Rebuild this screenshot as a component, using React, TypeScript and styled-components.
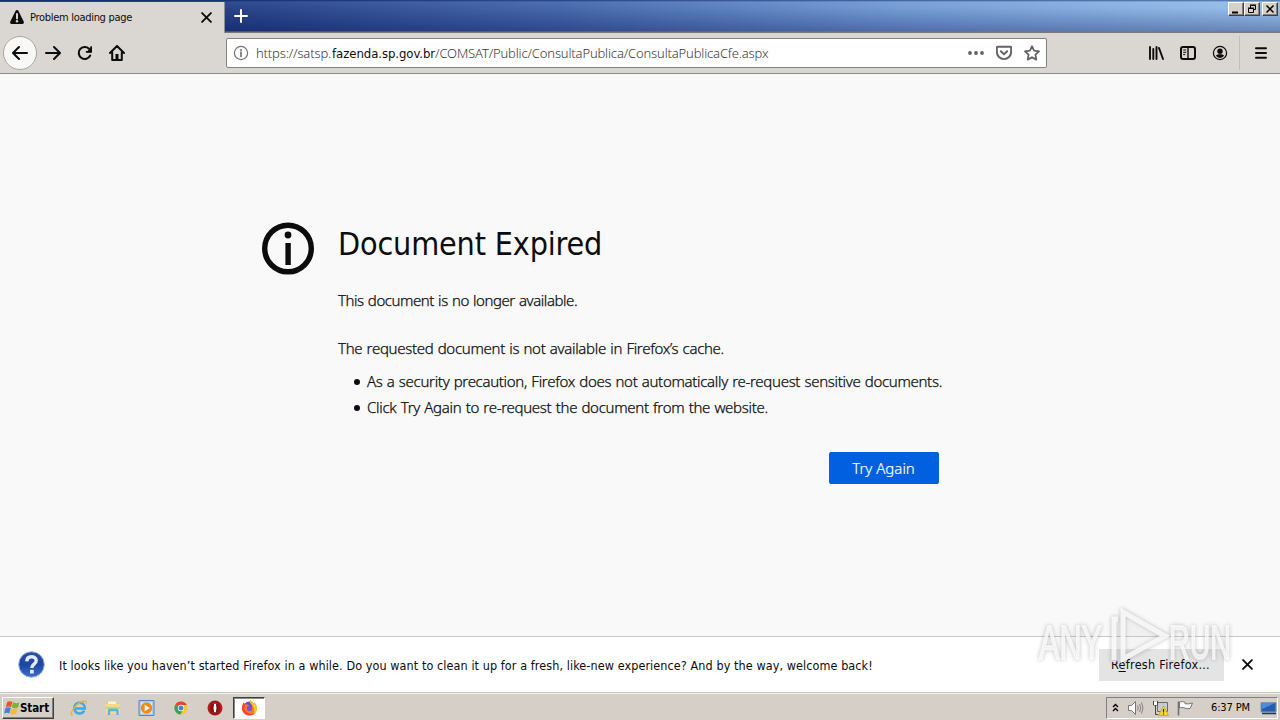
import React from 'react';
import styled, { createGlobalStyle } from 'styled-components';

const GlobalStyle = createGlobalStyle`
  *, *::before, *::after { box-sizing: border-box; }
  body { margin: 0; overflow: hidden; }
  svg { display: block; flex: none; }
  button { font: inherit; color: inherit; border: 0; padding: 0; margin: 0; background: none; }
`;

const condensed = '"DejaVu Sans Condensed", "DejaVu Sans", sans-serif';
const humanist = '"Noto Sans", "Open Sans", sans-serif';

const Desktop = styled.div`
  position: relative;
  display: flex;
  flex-direction: column;
  width: 1280px;
  height: 720px;
  overflow: hidden;
  background: #f9f9f9;
  color: #0c0c0d;
  font-family: ${condensed};
`;

/* Window title bar */
const TitleBar = styled.header`
  display: flex;
  flex: none;
  height: 33px;
  background:
    linear-gradient(180deg, rgba(5, 30, 95, 0.55) 0, rgba(255, 255, 255, 0.1) 2px, rgba(255, 255, 255, 0.06) 8px, rgba(20, 25, 90, 0.32) 31px, #77797c 32px),
    linear-gradient(90deg, #173278 0, #1b3880 225px, #3b5fa5 560px, #6c96d2 900px, #92bde9 1280px);
`;
const Tab = styled.div`
  display: flex;
  align-items: center;
  width: 225px;
  height: 31px;
  margin-top: 2px;
  padding: 0 12px 1px 9px;
  background: #dad6d1;
  border-right: 1px solid #8c8f98;
`;
const TabTitle = styled.span`
  flex: 1;
  margin-left: 5px;
  font-size: 11px;
  letter-spacing: -0.294px;
  white-space: nowrap;
`;
const NewTab = styled.button`
  display: flex;
  margin: 9px 0 0 9px;
  height: 14px;
`;
const WindowControls = styled.div`
  display: flex;
  margin: 2px 2px 0 auto;
`;
const WindowButton = styled.button<{ $gap?: boolean }>`
  display: flex;
  align-items: center;
  justify-content: center;
  width: 16px;
  height: 14px;
  margin-left: ${p => (p.$gap ? 2 : 0)}px;
  background: #d6d1c8;
  border: 1px solid;
  border-color: #fff #404040 #404040 #fff;
  box-shadow: inset -1px -1px #808080;
`;

/* Navigation toolbar */
const Toolbar = styled.nav`
  display: flex;
  align-items: center;
  flex: none;
  height: 41px;
  padding: 0 3px;
  background: #dad6d1;
  border-bottom: 1px solid #8b8b88;
`;
const BackButton = styled.button`
  display: flex;
  align-items: center;
  justify-content: center;
  width: 34px;
  height: 34px;
  border: 1px solid #aaa7a3;
  border-radius: 50%;
  background: #f8f8f7;
`;
const ToolButton = styled.button`
  display: flex;
  align-items: center;
  justify-content: center;
  width: 32px;
  height: 32px;
`;
const AddressBar = styled.div`
  display: flex;
  align-items: center;
  width: 821px;
  height: 30px;
  margin-left: 93px;
  padding: 0 6px 0 6px;
  background: #fff;
  border: 1px solid #85827e;
  border-radius: 2px;
`;
const Url = styled.div`
  flex: 1;
  margin-left: 7px;
  font: 300 13px ${humanist};
  letter-spacing: -0.155px;
  color: #38383d;
  white-space: nowrap;
`;
const Domain = styled.span`
  font-family: ${condensed};
  font-weight: 400;
  letter-spacing: -0.06px;
  margin-left: 1px;
  color: #0c0c0d;
`;
const UrlActions = styled.div`
  display: flex;
  gap: 12px;
`;
const ToolGroup = styled.div`
  display: flex;
  align-items: center;
  margin-left: auto;
`;
const Divider = styled.div`
  width: 1px;
  height: 34px;
  margin: 0 5px 0 3px;
  background: #c3c0bb;
`;

/* Error page */
const Page = styled.main`
  flex: 1;
  display: flex;
  align-items: flex-start;
  padding: 148px 0 0 262px;
`;
const Message = styled.section`
  display: flex;
  flex-direction: column;
  width: 640px;
  margin-left: 24px;
  white-space: nowrap;
`;
const Heading = styled.h1`
  margin: 1px 0 0;
  font-size: 32px;
  line-height: 43px;
  font-weight: 400;
  letter-spacing: -0.17px;
`;
const Paragraph = styled.p<{ $spacing: number; $top: number }>`
  margin: ${p => p.$top}px 0 0;
  font: 300 15px/24px ${humanist};
  letter-spacing: ${p => p.$spacing}px;
  word-spacing: 0.7px;
  -webkit-text-stroke: 0.25px;
`;
const Bullets = styled.ul`
  display: flex;
  flex-direction: column;
  gap: 2px;
  margin: 9px 0 0 17px;
  padding: 0;
  list-style: none;
`;
const Bullet = styled.li<{ $spacing: number }>`
  display: flex;
  align-items: center;
  font: 300 15px/24px ${humanist};
  letter-spacing: ${p => p.$spacing}px;
  word-spacing: 0.7px;
  -webkit-text-stroke: 0.25px;
  &::before {
    content: '';
    width: 6px;
    height: 6px;
    margin: 2px 7px 0 -1px;
    border-radius: 50%;
    background: #0c0c0d;
  }
`;
const TryAgain = styled.button`
  width: 110px;
  height: 32px;
  margin: 33px 0 0 491px;
  padding-right: 1px;
  border-radius: 2px;
  background: #0060df;
  color: #fff;
  font: 300 15px/32px ${humanist};
  -webkit-text-stroke: 0.2px;
`;

/* Notification strip */
const Notification = styled.aside`
  display: flex;
  align-items: center;
  flex: none;
  height: 57px;
  padding: 0 27px 0 18px;
  background: #fff;
  border-top: 1px solid #c8c8c8;
  border-bottom: 1px solid #c9c7c0;
  font-size: 12.5px;
  white-space: nowrap;
`;
const NotificationText = styled.span`
  flex: 1;
  margin: 2px 0 0 14px;
  letter-spacing: 0.085px;
`;
const RefreshButton = styled.button`
  width: 125px;
  height: 32px;
  margin-right: 18px;
  padding-right: 2px;
  background: #e4e4e4;
  letter-spacing: 0.29px;
`;
const AccessKey = styled.span`
  text-decoration: underline;
  text-underline-offset: 2px;
`;

/* Taskbar */
const Taskbar = styled.footer`
  display: flex;
  align-items: center;
  flex: none;
  height: 27px;
  padding: 1px 2px 0;
  background: #d5cfc7;
  border-top: 1px solid #f4f2ee;
`;
const StartButton = styled.button`
  display: flex;
  align-items: center;
  width: 52px;
  height: 22px;
  padding-left: 1px;
  border: 1px solid;
  border-color: #fff #404040 #404040 #fff;
  box-shadow: inset -1px -1px #808080;
  font-size: 11.5px;
  font-weight: 700;
  letter-spacing: -0.086px;
  color: #000;
`;
const QuickLaunch = styled.div`
  display: flex;
  align-items: center;
  margin-left: 8px;
`;
const Launcher = styled.div<{ $active?: boolean }>`
  display: flex;
  align-items: center;
  justify-content: center;
  width: 34px;
  height: 22px;
  ${p => p.$active && `
    width: 32px;
    margin-left: 1px;
    background: #fff;
    border: 1px solid;
    border-color: #404040 #fff #fff #404040;
    box-shadow: inset 1px 1px #8c8882;
  `}
`;
const Tray = styled.div`
  display: flex;
  align-items: center;
  width: 172px;
  height: 22px;
  margin-left: auto;
  padding-left: 5px;
  border: 1px solid;
  border-color: #808080 #fff #fff #808080;
`;
const TrayIcons = styled.div`
  display: flex;
  align-items: center;
  gap: 8px;
`;
const Clock = styled.time`
  margin: 0 10px 0 auto;
  font-size: 11px;
  letter-spacing: -0.124px;
  color: #000;
  white-space: nowrap;
`;

/* Translucent brand mark floating over the page corner */
const Watermark = styled.svg`
  position: absolute;
  left: 1030px;
  top: 600px;
  pointer-events: none;
  filter: drop-shadow(0 0 2px rgba(0, 0, 0, 0.32));
`;

const line = { fill: 'none', stroke: '#0c0c0d', strokeWidth: 2, strokeLinecap: 'round', strokeLinejoin: 'round' } as const;

const WarningIcon = () => (
  <svg width="16" height="16" viewBox="0 0 16 16">
    <path d="M8 1c.7 0 1.200.4 1.500 1l5.200 10.500c.6 1.200-.1 2.500-1.500 2.500H2.800c-1.400 0-2.100-1.300-1.500-2.500L6.500 2C6.800 1.400 7.300 1 8 1z" fill="#0c0c0d" />
    <path d="M8 5v4.500" stroke="#dad6d1" strokeWidth="2" strokeLinecap="round" />
    <circle cx="8" cy="12.300" r="1.200" fill="#dad6d1" />
  </svg>
);
const CrossIcon = ({ size = 10 }: { size?: number }) => (
  <svg width={size} height={size} viewBox="0 0 10 10"><path d="M1 1l8 8M9 1L1 9" {...line} strokeWidth={1.7} /></svg>
);
const ArrowIcon = ({ flip = false }: { flip?: boolean }) => (
  <svg width="16" height="16" viewBox="0 0 16 16">
    <path d={flip ? 'M1 8h14M9 2l6 6-6 6' : 'M15 8H1M7 2L1 8l6 6'} {...line} />
  </svg>
);
const ReloadIcon = () => (
  <svg width="16" height="16" viewBox="0 0 16 16">
    <path d="M13.200 10.500A6 6 0 1 1 12 3.700" {...line} />
    <path d="M15 1v6a.8.8 0 0 1-.8.8H9z" fill="#0c0c0d" />
    <path d="M9.500 6.800H14V2" {...line} strokeWidth={1.600} />
  </svg>
);
const HomeIcon = () => (
  <svg width="16" height="16" viewBox="0 0 16 16">
    <path d="M1 8l7-7 7 7M3.200 7.500V15h9.600V7.500" {...line} />
    <path d="M6.500 15V9h3v6z" fill="#0c0c0d" />
  </svg>
);
const PageInfoIcon = () => (
  <svg width="16" height="16" viewBox="0 0 16 16">
    <circle cx="8" cy="8" r="6.600" fill="none" stroke="#737373" strokeWidth="1.200" />
    <circle cx="8" cy="4.900" r="1" fill="#737373" />
    <path d="M8 7v4.500" stroke="#737373" strokeWidth="1.700" strokeLinecap="round" />
  </svg>
);
const DotsIcon = () => (
  <svg width="16" height="16" viewBox="0 0 16 16" fill="#636366">
    <circle cx="2" cy="8" r="1.900" /><circle cx="8" cy="8" r="1.900" /><circle cx="14" cy="8" r="1.900" />
  </svg>
);
const PocketIcon = () => (
  <svg width="16" height="16" viewBox="0 0 16 16" fill="none" stroke="#636366" strokeWidth="1.900" strokeLinecap="round" strokeLinejoin="round">
    <path d="M1.500 1.800h13a.6.6 0 0 1 .6.600V7a7.100 7.100 0 0 1-14.200 0V2.400a.6.600 0 0 1 .6-.6z" /><path d="M4.800 6.200L8 9.300l3.200-3.100" />
  </svg>
);
const StarIcon = () => (
  <svg width="16" height="16" viewBox="0 0 16 16" fill="none" stroke="#636366" strokeWidth="1.800" strokeLinejoin="round">
    <path d="M8 1.200l2.100 4.500 4.900.6-3.600 3.400.9 4.900L8 12.200l-4.300 2.400.9-4.900L1 6.300l4.900-.6z" />
  </svg>
);
const LibraryIcon = () => (
  <svg width="16" height="16" viewBox="0 0 16 16"><path d="M2 2v12M5.300 4v10M8.500 2v12M11 3l4 11" {...line} strokeWidth={1.900} /></svg>
);
const SidebarIcon = () => (
  <svg width="16" height="16" viewBox="0 0 16 16">
    <rect x="1" y="2" width="14" height="12" rx="2" {...line} />
    <path d="M8 2v12" stroke="#0c0c0d" strokeWidth="1.400" /><path d="M3.200 5h3M3.200 7.300h3M3.200 9.600h2" stroke="#0c0c0d" />
  </svg>
);
const AccountIcon = () => (
  <svg width="16" height="16" viewBox="0 0 16 16">
    <circle cx="8" cy="8" r="6.600" {...line} strokeWidth={1.200} />
    <circle cx="8" cy="6.200" r="2.700" fill="#0c0c0d" /><path d="M3.900 10.800C4.700 9.300 6.200 9.200 8 9.200s3.300.1 4.100 1.600A5 5 0 0 1 8 12.900a5 5 0 0 1-4.100-2.100z" fill="#0c0c0d" />
  </svg>
);
const MenuIcon = () => (
  <svg width="16" height="16" viewBox="0 0 16 16"><path d="M3 3.200h10M3 8h10M3 12.800h10" {...line} /></svg>
);
const LargeInfoIcon = () => (
  <svg width="52" height="53" viewBox="0 0 52 53">
    <circle cx="26" cy="26.500" r="23.300" fill="none" stroke="#0c0c0d" strokeWidth="5.400" />
    <circle cx="26" cy="13" r="3.400" fill="#0c0c0d" /><path d="M23.400 21h5.400v22h-5.400z" fill="#0c0c0d" />
  </svg>
);
const HelpIcon = () => (
  <svg width="27" height="27" viewBox="0 0 27 27">
    <defs><linearGradient id="help" x2="0" y2="1"><stop stopColor="#2c4fa4" /><stop offset=".5" stopColor="#1e45a3" /><stop offset="1" stopColor="#3b70ce" /></linearGradient></defs>
    <circle cx="13.500" cy="13.500" r="12.800" fill="url(#help)" stroke="#9cb6e2" />
    <path d="M8.800 10.400c.1-3 2-4.600 4.700-4.600s4.700 1.500 4.700 4c0 3.500-4.400 3.300-4.400 7.200" fill="none" stroke="#e4ebf8" strokeWidth="3.400" />
    <rect x="12" y="18.800" width="3.800" height="3.800" rx=".6" fill="#e4ebf8" />
  </svg>
);
const WindowsFlag = () => (
  <svg width="16" height="16" viewBox="0 0 16 16">
    <path d="M3.200 2C5 .8 7 1 8.400 2L7 7.200C5.500 6.300 3.600 6.200 1.700 7.300z" fill="#e4572a" />
    <path d="M9 2.300c1.800 1 4 1.200 6.400 0L14 7.600c-2.200 1.100-4.400 1-6.300 0z" fill="#79b82f" />
    <path d="M1.500 8.100c1.900-1 3.800-1 5.300 0l-1.500 5.300c-1.500-1-3.400-1-5.300 0z" fill="#3a86cf" />
    <path d="M7.500 8.400c1.900 1 4.100 1 6.300 0l-1.500 5.200c-2.100 1.200-4.400 1.100-6.300 0z" fill="#f6bd25" />
  </svg>
);
const ExplorerIcon = () => (
  <svg width="18" height="18" viewBox="0 0 18 18" fill="none">
    <path d="M14.300 11.600A5.400 5.400 0 1 1 14.900 9.500H5.500" stroke="#43a9e0" strokeWidth="2.500" />
    <path d="M3 15.500C-.5 17.500 1 11 6.500 6S17.500.8 16 4.500" stroke="#e5b53b" strokeWidth="1.400" />
  </svg>
);
const FolderIcon = () => (
  <svg width="18" height="18" viewBox="0 0 18 18">
    <path d="M2 3h5l1 1.500h7V14H2z" fill="#eccb67" /><path d="M4 2.500h8v5H4z" fill="#f9f3d4" />
    <path d="M1.500 5h14.500v10H1.500z" fill="#f4da83" /><path d="M1.500 8h14.500v2H1.500z" fill="#b5d59a" />
    <path d="M5 16V12q0-1 1-1H12.500q1 0 1 1v4" fill="none" stroke="#5fb1df" strokeWidth="2.300" />
  </svg>
);
const PlayerIcon = () => (
  <svg width="18" height="18" viewBox="0 0 18 18">
    <path d="M1 1.500h15v15H1z" fill="#a9cdec" stroke="#5389b9" /><path d="M3 3.500h11v11H3z" fill="#d9e8f4" />
    <circle cx="8.500" cy="9" r="5.700" fill="#f28a17" /><path d="M6.700 5.700l5 3.300-5 3.300z" fill="#fff" />
  </svg>
);
const ChromeIcon = () => (
  <svg width="16" height="16" viewBox="0 0 16 16">
    <circle cx="8" cy="8" r="6.600" fill="#f7c72b" /><path d="M8 8L2.300 4.700A6.600 6.600 0 0 1 13.900 5H8z" fill="#df4636" />
    <path d="M2.300 4.700A6.600 6.600 0 0 0 7.400 14.600L10 9.500 8 8z" fill="#35a456" /><circle cx="8" cy="8" r="3.200" fill="#fff" /><circle cx="8" cy="8" r="2.500" fill="#4b83db" />
  </svg>
);
const OperaIcon = () => (
  <svg width="16" height="16" viewBox="0 0 16 16"><circle cx="8" cy="8" r="7.500" fill="#b21f23" /><ellipse cx="8" cy="8" rx="5.300" ry="7" fill="#981216" /><ellipse cx="8" cy="8" rx="2" ry="5.200" fill="#fff" stroke="#6c0a0d" /></svg>
);
const FirefoxIcon = () => (
  <svg width="17" height="17" viewBox="0 0 17 17">
    <circle cx="8.500" cy="9" r="6.500" fill="#6b47d3" />
    <path d="M2.500 3.500L4 5.500C6 5 7.500 6 8.200 7c-2 0-2.400 1-1.500 2.200 1 1.200 2.800 1 3.600.2C12 7.500 10 5 9 3.800 8.700 2.500 9.200 1.500 9.700 1c.8 2 2.500 2.600 3.400 4l.4-1.500C15.500 6 16.500 9 15.500 11.500A7.400 7.400 0 0 1 1.300 11C.7 8.500 1.300 6 2.500 3.500z" fill="#ff7b24" />
    <path d="M9.700 1c.8 2 2.500 2.600 3.400 4l.4-1.500c2 2.500 3 5.500 2 8-.5 1.500-1.500 2.500-2.500 3.200C14 10 12 6 9 3.800 8.700 2.500 9.200 1.500 9.700 1z" fill="#ffc52d" />
    <path d="M1.300 11a7.400 7.400 0 0 0 11.700 3.700C8 15.500 4 13 3.200 9L4 5.500l-1.500-2C1.300 6 .7 8.500 1.300 11z" fill="#f23f48" /><circle cx="8.600" cy="9.500" r="2.600" fill="#7556d9" />
  </svg>
);
const ChevronsIcon = () => (
  <svg width="7" height="10" viewBox="0 0 7 10"><path d="M1 4l2.500-2.500L6 4M1 8l2.500-2.500L6 8" fill="none" stroke="#000" strokeWidth="1.400" /></svg>
);
const SpeakerIcon = () => (
  <svg width="17" height="16" viewBox="0 0 17 16"><path d="M1.500 5.500h3l4-4v13l-4-4h-3z" fill="#fbfbfa" stroke="#777" /><path d="M10.500 5.500q1.500 2.500 0 5M12.500 4q2.700 4 0 8M14.500 2.500q3 5.500 0 11" fill="none" stroke="#85827e" /></svg>
);
const NetworkIcon = () => (
  <svg width="17" height="16" viewBox="0 0 17 16">
    <path d="M5.500 2.500h10v9h-10z" fill="#c4cdd3" stroke="#6a6a6a" /><path d="M7 14h6" stroke="#555" />
    <path d="M1.500 1v4h4V1M3.500 5v9.500H6" fill="none" stroke="#444" /><path d="M2 2h3v3H2z" fill="#fff" />
    <path d="M11.500 6l5 9.500h-10z" fill="#ffd829" stroke="#c59a0b" strokeWidth=".7" /><path d="M11.500 9v3.500m0 1v1" stroke="#222" strokeWidth="1.200" />
  </svg>
);
const FlagIcon = () => (
  <svg width="17" height="16" viewBox="0 0 17 16"><path d="M1.500 1.500v14" stroke="#6f6f6f" strokeWidth="1.600" /><path d="M2.500 2q3-1 5.500.2v1.500q3 .7 7.500-.7-1.500 4-2.500 5.500-3.500.8-6-.7-2-.8-4.500.2z" fill="#fafafa" stroke="#777" /></svg>
);
const DesktopIcon = () => (
  <svg width="17" height="16" viewBox="0 0 17 16">
    <path d="M1 2.500h15v9.500H1z" fill="#245fae" stroke="#7e98bd" /><path d="M2 3h13L2 9z" fill="#4f8ed8" /><path d="M2 13.500h14" stroke="#1b3763" strokeWidth="1.500" />
  </svg>
);

export default function App() {
  return (
    <Desktop>
      <GlobalStyle />
      <TitleBar>
        <Tab>
          <WarningIcon />
          <TabTitle>Problem loading page</TabTitle>
          <CrossIcon size={11} />
        </Tab>
        <NewTab aria-label="New tab">
          <svg width="14" height="14" viewBox="0 0 14 14"><path d="M7 1v12M1 7h12" stroke="#fff" strokeWidth="2" strokeLinecap="round" /></svg>
        </NewTab>
        <WindowControls>
          <WindowButton aria-label="Minimize"><svg width="12" height="10"><path d="M2 8.500h6" stroke="#000" strokeWidth="2" /></svg></WindowButton>
          <WindowButton aria-label="Restore">
            <svg width="12" height="10" viewBox="0 0 12 10"><path d="M4.500 4V1.500h5v4H8M4 1h6M2.500 4.500h5v4h-5zM2 4h6" fill="none" stroke="#000" /></svg>
          </WindowButton>
          <WindowButton $gap aria-label="Close"><svg width="10" height="10" viewBox="0 0 10 10"><path d="M1.500 1.500l7 7M8.500 1.500l-7 7" stroke="#000" strokeWidth="1.500" /></svg></WindowButton>
        </WindowControls>
      </TitleBar>
      <Toolbar>
        <BackButton aria-label="Back"><ArrowIcon /></BackButton>
        <ToolButton aria-label="Forward"><ArrowIcon flip /></ToolButton>
        <ToolButton aria-label="Reload"><ReloadIcon /></ToolButton>
        <ToolButton aria-label="Home"><HomeIcon /></ToolButton>
        <AddressBar>
          <PageInfoIcon />
          <Url>https://satsp.<Domain>fazenda.sp.gov.br</Domain>/COMSAT/Public/ConsultaPublica/ConsultaPublicaCfe.aspx</Url>
          <UrlActions><DotsIcon /><PocketIcon /><StarIcon /></UrlActions>
        </AddressBar>
        <ToolGroup>
          <ToolButton aria-label="Library"><LibraryIcon /></ToolButton>
          <ToolButton aria-label="Sidebars"><SidebarIcon /></ToolButton>
          <ToolButton aria-label="Account"><AccountIcon /></ToolButton>
          <Divider />
          <ToolButton aria-label="Menu"><MenuIcon /></ToolButton>
        </ToolGroup>
      </Toolbar>
      <Page>
        <LargeInfoIcon />
        <Message>
          <Heading>Document Expired</Heading>
          <Paragraph $top={22} $spacing={-0.44}>This document is no longer available.</Paragraph>
          <Paragraph $top={24} $spacing={-0.3}>The requested document is not available in Firefox’s cache.</Paragraph>
          <Bullets>
            <Bullet $spacing={-0.305}>As a security precaution, Firefox does not automatically re-request sensitive documents.</Bullet>
            <Bullet $spacing={-0.295}>Click Try Again to re-request the document from the website.</Bullet>
          </Bullets>
          <TryAgain>Try Again</TryAgain>
        </Message>
      </Page>
      <Notification>
        <HelpIcon />
        <NotificationText>It looks like you haven’t started Firefox in a while. Do you want to clean it up for a fresh, like-new experience? And by the way, welcome back!</NotificationText>
        <RefreshButton>R<AccessKey>e</AccessKey>fresh Firefox...</RefreshButton>
        <CrossIcon size={11} />
      </Notification>
      <Taskbar>
        <StartButton><WindowsFlag />Start</StartButton>
        <QuickLaunch>
          <Launcher><ExplorerIcon /></Launcher>
          <Launcher><FolderIcon /></Launcher>
          <Launcher><PlayerIcon /></Launcher>
          <Launcher><ChromeIcon /></Launcher>
          <Launcher><OperaIcon /></Launcher>
          <Launcher $active><FirefoxIcon /></Launcher>
        </QuickLaunch>
        <Tray>
          <TrayIcons><ChevronsIcon /><SpeakerIcon /><NetworkIcon /><FlagIcon /></TrayIcons>
          <Clock>6:37 PM</Clock>
          <DesktopIcon />
        </Tray>
      </Taskbar>
      <Watermark width="230" height="80" viewBox="0 0 230 80" fill="#fff" fillOpacity=".7">
        <text x="9" y="59" fontFamily="Liberation Sans, sans-serif" fontSize="49" textLength="63" lengthAdjust="spacingAndGlyphs" stroke="#fff" strokeOpacity=".6" strokeWidth="2">ANY</text>
        <text x="139" y="59" fontFamily="Liberation Sans, sans-serif" fontSize="49" textLength="62" lengthAdjust="spacingAndGlyphs" stroke="#fff" strokeOpacity=".6" strokeWidth="2">RUN</text>
        <path d="M93 12l42 24-42 23zM84 62V19h4" fill="#fff" fillOpacity=".15" stroke="#fff" strokeOpacity=".8" strokeWidth="5" />
      </Watermark>
    </Desktop>
  );
}
